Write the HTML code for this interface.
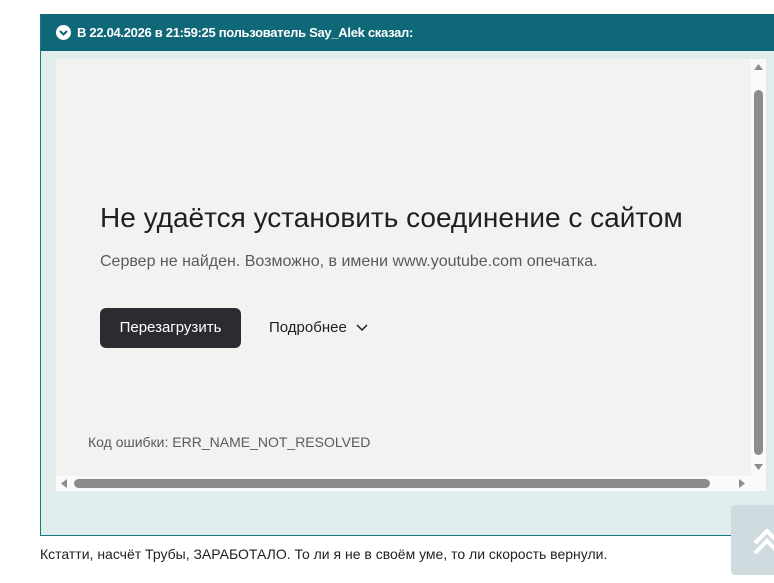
<!DOCTYPE html>
<html><head><meta charset="utf-8"><style>
body{margin:0;width:774px;height:583px;background:#fff;position:relative;overflow:hidden;font-family:"Liberation Sans",sans-serif}
.box{position:absolute;left:40px;top:14px;width:740px;height:521px;background:#e1eded;border-left:1px solid #0e7c80;border-bottom:1px solid #0e7c80}
.hdr{position:absolute;left:0;top:0;right:0;height:37px;background:#0f6878;color:#fff;font-weight:bold;font-size:13px;line-height:37px;padding-left:36px;letter-spacing:-0.3px}
.ic{position:absolute;left:15px;top:11px;width:15px;height:15px;border-radius:50%;background:#fff;line-height:0}
.ic svg{display:block}
.frame{position:absolute;left:56px;top:59px;width:710px;height:432px;background:#f2f2f0}
.vs{position:absolute;left:751px;top:59px;width:15px;height:417px;background:#fafafa}
.hs{position:absolute;left:56px;top:476px;width:710px;height:15px;background:#fafafa}
.thumbv{position:absolute;left:754px;top:90px;width:9px;height:365px;background:#8c8c8c;border-radius:5px}
.thumbh{position:absolute;left:74px;top:479px;width:636px;height:9px;background:#8c8c8c;border-radius:5px}
h1{position:absolute;left:100px;top:202px;margin:0;font-weight:normal;font-size:28px;color:#1f1f1f;white-space:nowrap}
.p{position:absolute;left:100px;top:253px;font-size:16px;color:#5a5a5a;white-space:nowrap}
.btn{position:absolute;left:100px;top:308px;width:141px;height:40px;background:#2c2c30;border-radius:6px;color:#fff;font-size:15px;line-height:40px;text-align:center}
.more{position:absolute;left:269px;top:319px;font-size:15px;color:#1f1f1f}
.code{position:absolute;left:88px;top:434px;font-size:14px;color:#5a5a5a}
.txt{position:absolute;left:40px;top:546px;font-size:14px;color:#222}
.top{position:absolute;left:731px;top:505px;width:50px;height:70px;background:#d0dbe0;border-radius:4px}
</style></head><body>
<div class="box"><div class="hdr"><div class="ic"><svg width="15" height="15"><path d="M4 6l3.5 3.5L11 6" stroke="#0f6878" stroke-width="2" fill="none"/></svg></div>В 22.04.2026 в 21:59:25 пользователь Say_Alek сказал:</div></div>
<div class="frame"></div>
<div class="vs"></div><div class="hs"></div>
<div class="thumbv"></div><div class="thumbh"></div>
<svg style="position:absolute;left:751px;top:59px" width="15" height="417"><path d="M3 11h9l-4.5-6z" fill="#8c8c8c"/><path d="M3 405h9l-4.5 6z" fill="#8c8c8c"/></svg>
<svg style="position:absolute;left:56px;top:476px" width="710" height="15"><path d="M11 3v9l-6-4.5z" fill="#8c8c8c"/><path d="M683 3v9l6-4.5z" fill="#8c8c8c"/></svg>
<h1>Не удаётся установить соединение с сайтом</h1>
<div class="p">Сервер не найден. Возможно, в имени www.youtube.com опечатка.</div>
<div class="btn">Перезагрузить</div>
<div class="more">Подробнее <svg width="14" height="10" style="margin-left:4px"><path d="M2 3l5 5 5-5" stroke="#1f1f1f" stroke-width="1.5" fill="none"/></svg></div>
<div class="code">Код ошибки: ERR_NAME_NOT_RESOLVED</div>
<div class="txt">Кстатти, насчёт Трубы, ЗАРАБОТАЛО. То ли я не в своём уме, то ли скорость вернули.</div>
<div class="top"><svg width="50" height="70"><path d="M24 38l12-12 12 12M24 48l12-12 12 12" stroke="#fff" stroke-width="4" fill="none"/></svg></div>
</body></html>
